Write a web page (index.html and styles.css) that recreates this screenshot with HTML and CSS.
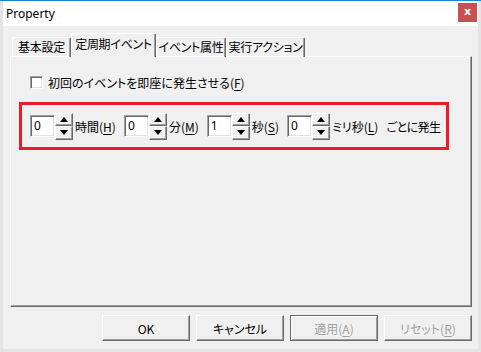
FILE: index.html
```html
<!DOCTYPE html>
<html lang="ja">
<head>
    <meta charset="UTF-8">
    <title>Property</title>
    <link rel="stylesheet" href="styles.css">
</head>
<body>
    <div class="window">
        <!-- Title bar -->
        <div class="titlebar">
            <span class="title">Property</span>
            <span class="close">x</span>
        </div>

        <div class="client">
            <!-- Tabs -->
            <div class="tabs">
                <div class="tab tab-basic">基本設定</div>
                <div class="tab tab-cycle active">定周期イベント</div>
                <div class="tab tab-attr">イベント属性</div>
                <div class="tab tab-action">実行アクション</div>
            </div>

            <!-- Tab page -->
            <div class="panel">
                <div class="check">
                    <span class="check-box"></span>
                    <span>初回のイベントを即座に発生させる(<u>F</u>)</span>
                </div>

                <div class="interval">
                    <div class="spin-group">
                        <div class="field">0</div>
                        <div class="spinner"><span class="spin-btn up"></span><span class="spin-btn down"></span></div>
                        <span class="unit">時間(<u>H</u>)</span>
                    </div>
                    <div class="spin-group">
                        <div class="field">0</div>
                        <div class="spinner"><span class="spin-btn up"></span><span class="spin-btn down"></span></div>
                        <span class="unit">分(<u>M</u>)</span>
                    </div>
                    <div class="spin-group">
                        <div class="field">1</div>
                        <div class="spinner"><span class="spin-btn up"></span><span class="spin-btn down"></span></div>
                        <span class="unit">秒(<u>S</u>)</span>
                    </div>
                    <div class="spin-group">
                        <div class="field">0</div>
                        <div class="spinner"><span class="spin-btn up"></span><span class="spin-btn down"></span></div>
                        <span class="unit">ミリ秒(<u>L</u>)</span>
                    </div>
                    <span class="tail">ごとに発生</span>
                </div>
            </div>

            <!-- Dialog buttons -->
            <div class="buttons">
                <div class="btn">OK</div>
                <div class="btn">キャンセル</div>
                <div class="btn default disabled">適用(<u>A</u>)</div>
                <div class="btn disabled">リセット(<u>R</u>)</div>
            </div>
        </div>
    </div>
</body>
</html>
```

FILE: styles.css
```css
/* General Styles */
body {
    margin: 0;
    background-color: #f0f0f0;
    font-family: "Noto Sans CJK JP", "Noto Sans", sans-serif;
    font-size: 12px;
    font-feature-settings: "palt";
    color: #000;
}

.window {
    width: 481px;
    height: 352px;
    box-sizing: border-box;
    border-top: 1px solid #1883d7;
    padding: 0 3px 3px 3px;
    background-color: #e4e4e4;
    display: flex;
    flex-direction: column;
}

/* Title bar */
.titlebar {
    height: 25px;
    background-color: #fff;
    display: flex;
    align-items: flex-start;
    justify-content: space-between;
}

.title {
    font-family: "Noto Sans", sans-serif;
    font-size: 12px;
    margin: 4px 0 0 3px;
}

.close {
    width: 19px;
    height: 19px;
    margin: 2px 1px 0 0;
    background-color: #c75050;
    color: #fff;
    font-family: "DejaVu Sans", sans-serif;
    font-weight: bold;
    font-size: 11px;
    line-height: 17px;
    text-align: center;
}

/* Client area */
.client {
    flex: 1;
    background-color: #f0f0f0;
    padding: 7px 6px 0 7px;
}

.tabs {
    display: flex;
    align-items: flex-end;
    padding-left: 2px;
    height: 24px;
    position: relative;
    z-index: 1;
}

.tab {
    box-sizing: border-box;
    height: 20px;
    line-height: 18px;
    text-align: center;
    letter-spacing: -0.3px;
    border: 1px solid #fff;
    border-right-color: #696969;
    border-bottom: none;
    border-radius: 2px 2px 0 0;
    box-shadow: inset -1px 0 #a0a0a0;
    white-space: nowrap;
}

.tab-basic { width: 59px; }
.tab-cycle { width: 85px; }
.tab-attr { width: 70px; }
.tab-action { width: 79px; }

.tab.active {
    height: 24px;
    line-height: 20px;
    background-color: #f0f0f0;
}

/* Tab page */
.panel {
    box-sizing: border-box;
    height: 251px;
    margin-top: -1px;
    border: 1px solid #fff;
    border-right-color: #696969;
    border-bottom-color: #696969;
    box-shadow: inset -1px -1px #a0a0a0;
    padding: 19px 0 0 19px;
}

.check {
    display: flex;
    align-items: center;
    gap: 5px;
    height: 13px;
}

.check-box {
    box-sizing: border-box;
    width: 13px;
    height: 13px;
    background-color: #fff;
    border: 1px solid;
    border-color: #a0a0a0 #fff #fff #a0a0a0;
    box-shadow: inset 1px 1px #696969, inset -1px -1px #e3e3e3;
}

u {
    text-decoration-thickness: 1px;
    text-underline-offset: 2px;
}

/* Interval box (red highlight) */
.interval {
    box-sizing: border-box;
    width: 430px;
    height: 48px;
    margin: 13px 0 0 -11px;
    border: 3px solid #ed1c24;
    padding-left: 8px;
    display: flex;
    align-items: center;
}

.spin-group {
    display: flex;
    align-items: center;
    margin-right: 8px;
}

.field {
    box-sizing: border-box;
    width: 25px;
    height: 22px;
    padding: 1px 0 0 3px;
    background-color: #fff;
    border: 1px solid;
    border-color: #a0a0a0 #fff #fff #a0a0a0;
    box-shadow: inset 1px 1px #696969, inset -1px -1px #e3e3e3;
    line-height: 18px;
    font-family: "Noto Sans", sans-serif;
    font-size: 12px;
}

.spinner {
    display: flex;
    flex-direction: column;
    width: 18px;
    height: 27px;
}

.spin-btn {
    flex: 1;
    box-sizing: border-box;
    border: 1px solid;
    border-color: #fff #696969 #696969 #fff;
    box-shadow: inset -1px -1px #a0a0a0;
    background-color: #f0f0f0;
    display: flex;
    align-items: center;
    justify-content: center;
}

.spin-btn::after {
    content: "";
    border-left: 4px solid transparent;
    border-right: 4px solid transparent;
}

.spin-btn.up::after {
    border-bottom: 5px solid #000;
}

.spin-btn.down::after {
    border-top: 5px solid #000;
}

.unit {
    margin-left: 2px;
    white-space: nowrap;
}

.tail {
    white-space: nowrap;
    letter-spacing: -0.5px;
}

/* Dialog buttons */
.buttons {
    display: flex;
    justify-content: flex-end;
    gap: 6px;
    margin-top: 8px;
}

.btn {
    box-sizing: border-box;
    width: 88px;
    height: 26px;
    border: 1px solid;
    border-color: #fff #696969 #696969 #fff;
    box-shadow: inset -1px -1px #a0a0a0;
    display: flex;
    align-items: center;
    justify-content: center;
}

.btn.default {
    border-color: #696969;
    box-shadow: inset 1px 1px #fff, inset -1px -1px #a0a0a0;
}

.btn.disabled {
    color: #a0a0a0;
}
```
